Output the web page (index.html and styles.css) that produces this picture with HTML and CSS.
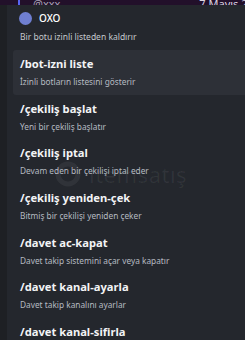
FILE: index.html
```html
<!DOCTYPE html>
<html lang="tr">
<head>
<meta charset="utf-8">
<link rel="stylesheet" href="styles.css">
</head>
<body>
<div class="topbar">
  <span class="topbar-accent"></span>
  <span class="topbar-user">@xxx</span>
  <span class="topbar-date">7 Mayıs 2024</span>
</div>
<div class="main">
  <div class="gutter"></div>
  <div class="panel">
    <div class="header">
      <div class="header-row">
        <span class="avatar"></span>
        <span class="bot-name">OXO</span>
      </div>
      <div class="header-desc">Bir botu izinli listeden kaldırır</div>
    </div>
    <div class="item active">
      <div class="title">/bot-izni liste</div>
      <div class="desc">İzinli botların listesini gösterir</div>
    </div>
    <div class="item">
      <div class="title">/çekiliş başlat</div>
      <div class="desc">Yeni bir çekiliş başlatır</div>
    </div>
    <div class="item">
      <div class="title">/çekiliş iptal</div>
      <div class="desc">Devam eden bir çekilişi iptal eder</div>
    </div>
    <div class="item">
      <div class="title">/çekiliş yeniden-çek</div>
      <div class="desc">Bitmiş bir çekilişi yeniden çeker</div>
    </div>
    <div class="item">
      <div class="title">/davet ac-kapat</div>
      <div class="desc">Davet takip sistemini açar veya kapatır</div>
    </div>
    <div class="item">
      <div class="title">/davet kanal-ayarla</div>
      <div class="desc">Davet takip kanalını ayarlar</div>
    </div>
    <div class="item last">
      <div class="title">/davet kanal-sifirla</div>
    </div>
    <div class="watermark">
      <svg class="wm-logo" width="26" height="26" viewBox="0 0 26 26"><circle cx="13" cy="13" r="10" fill="none" stroke="currentColor" stroke-width="5"/></svg>
      <span class="wm-text">itemsatış</span>
    </div>
  </div>
</div>
</body>
</html>
```
FILE: styles.css
```css
* { box-sizing: border-box; }
html, body { margin: 0; padding: 0; }
body {
  width: 245px;
  height: 340px;
  overflow: hidden;
  background: #1e2024;
  font-family: "Noto Sans", "Liberation Sans", sans-serif;
  color: #f2f3f5;
}
.topbar {
  height: 5px;
  background: #22102a;
  display: flex;
  align-items: flex-end;
  overflow: hidden;
}
.topbar-accent {
  width: 2px;
  height: 5px;
  margin-left: 18px;
  background: #5865f2;
  flex: none;
}
.topbar-user {
  margin-left: 13px;
  font-size: 11px;
  line-height: 11px;
  margin-bottom: -4px;
  color: #a7a0b5;
  flex: none;
}
.topbar-date {
  margin-left: 139px;
  font-size: 11px;
  line-height: 11px;
  margin-bottom: -4px;
  color: #dcd6e2;
  white-space: nowrap;
  flex: none;
}
.main {
  display: flex;
  height: 335px;
}
.gutter {
  width: 7px;
  flex: none;
  background: #1e2024;
}
.panel {
  flex: 1;
  background: #24272d;
  padding-left: 6px;
  position: relative;
  overflow: hidden;
}
.header {
  height: 45px;
  padding: 7px 0 0 6px;
}
.header-row {
  display: flex;
  align-items: center;
  height: 13px;
}
.avatar {
  width: 13px;
  height: 13px;
  border-radius: 50%;
  background: #6f7fd1;
  flex: none;
}
.bot-name {
  margin-left: 7px;
  font-size: 10px;
  line-height: 13px;
  font-weight: 500;
  color: #ffffff;
}
.header-desc {
  margin-top: 6px;
  padding-left: 1px;
  font-size: 8.5px;
  line-height: 12px;
  color: #c4c7cc;
}
.item {
  height: 44.67px;
  padding: 6px 7px 0 7px;
  border-radius: 3px 0 0 3px;
}
.item.active {
  background: #2d3037;
}
.title {
  font-size: 11.2px;
  line-height: 16px;
  font-weight: 700;
  color: #f2f3f5;
  white-space: nowrap;
}
.desc {
  margin-top: 4px;
  font-size: 8.3px;
  line-height: 12px;
  color: #b5bac1;
  white-space: nowrap;
}
.watermark {
  position: absolute;
  left: 48px;
  top: 156px;
  display: flex;
  align-items: center;
  color: rgba(255, 255, 255, 0.06);
  pointer-events: none;
}
.wm-logo { flex: none; }
.wm-text {
  margin-left: 8px;
  font-size: 22px;
  line-height: 26px;
  font-weight: 400;
  letter-spacing: 0.5px;
}
```
